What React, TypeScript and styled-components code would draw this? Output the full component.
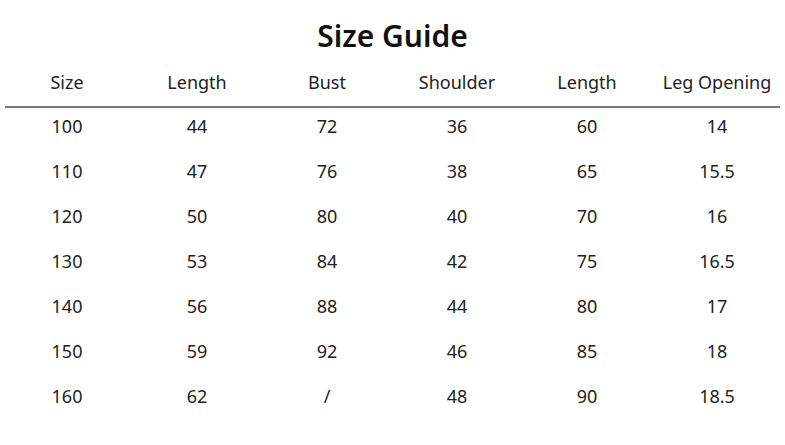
import React from 'react';
import styled, { createGlobalStyle } from 'styled-components';

const GlobalStyle = createGlobalStyle`
  body {
    margin: 0;
    background: #fff;
    font-family: "Noto Sans", "Open Sans", sans-serif;
    color: #1a1a1a;
  }
`;

const Page = styled.div`
  width: 785px;
  height: 445px;
  padding-top: 16px;
  box-sizing: border-box;
`;

const Title = styled.h1`
  margin: 0;
  font-size: 30px;
  line-height: 40px;
  font-weight: 600;
  text-align: center;
  color: #111;
`;

const Row = styled.div<{ $header?: boolean }>`
  display: grid;
  grid-template-columns: repeat(6, 130px);
  margin-left: 2px;
  font-size: 18px;
  line-height: 24px;
  color: #222;
  margin-top: ${(p) => (p.$header ? '14px' : '0')};
`;

const Cell = styled.div`
  text-align: center;
`;

const Divider = styled.div`
  height: 2px;
  margin: 12px 5px 6px 5px;
  background: #7a7a7a;
`;

const Body = styled.div`
  display: flex;
  flex-direction: column;
  gap: 21px;
`;

const headers = ['Size', 'Length', 'Bust', 'Shoulder', 'Length', 'Leg Opening'];

const rows = [
  ['100', '44', '72', '36', '60', '14'],
  ['110', '47', '76', '38', '65', '15.5'],
  ['120', '50', '80', '40', '70', '16'],
  ['130', '53', '84', '42', '75', '16.5'],
  ['140', '56', '88', '44', '80', '17'],
  ['150', '59', '92', '46', '85', '18'],
  ['160', '62', '/', '48', '90', '18.5'],
];

const App: React.FC = () => {
  return (
    <>
      <GlobalStyle />
      <Page>
        <Title>Size Guide</Title>
        <Row $header>
          {headers.map((h, i) => (
            <Cell key={i}>{h}</Cell>
          ))}
        </Row>
        <Divider />
        <Body>
          {rows.map((r) => (
            <Row key={r[0]}>
              {r.map((v, i) => (
                <Cell key={i}>{v}</Cell>
              ))}
            </Row>
          ))}
        </Body>
      </Page>
    </>
  );
};

export default App;
